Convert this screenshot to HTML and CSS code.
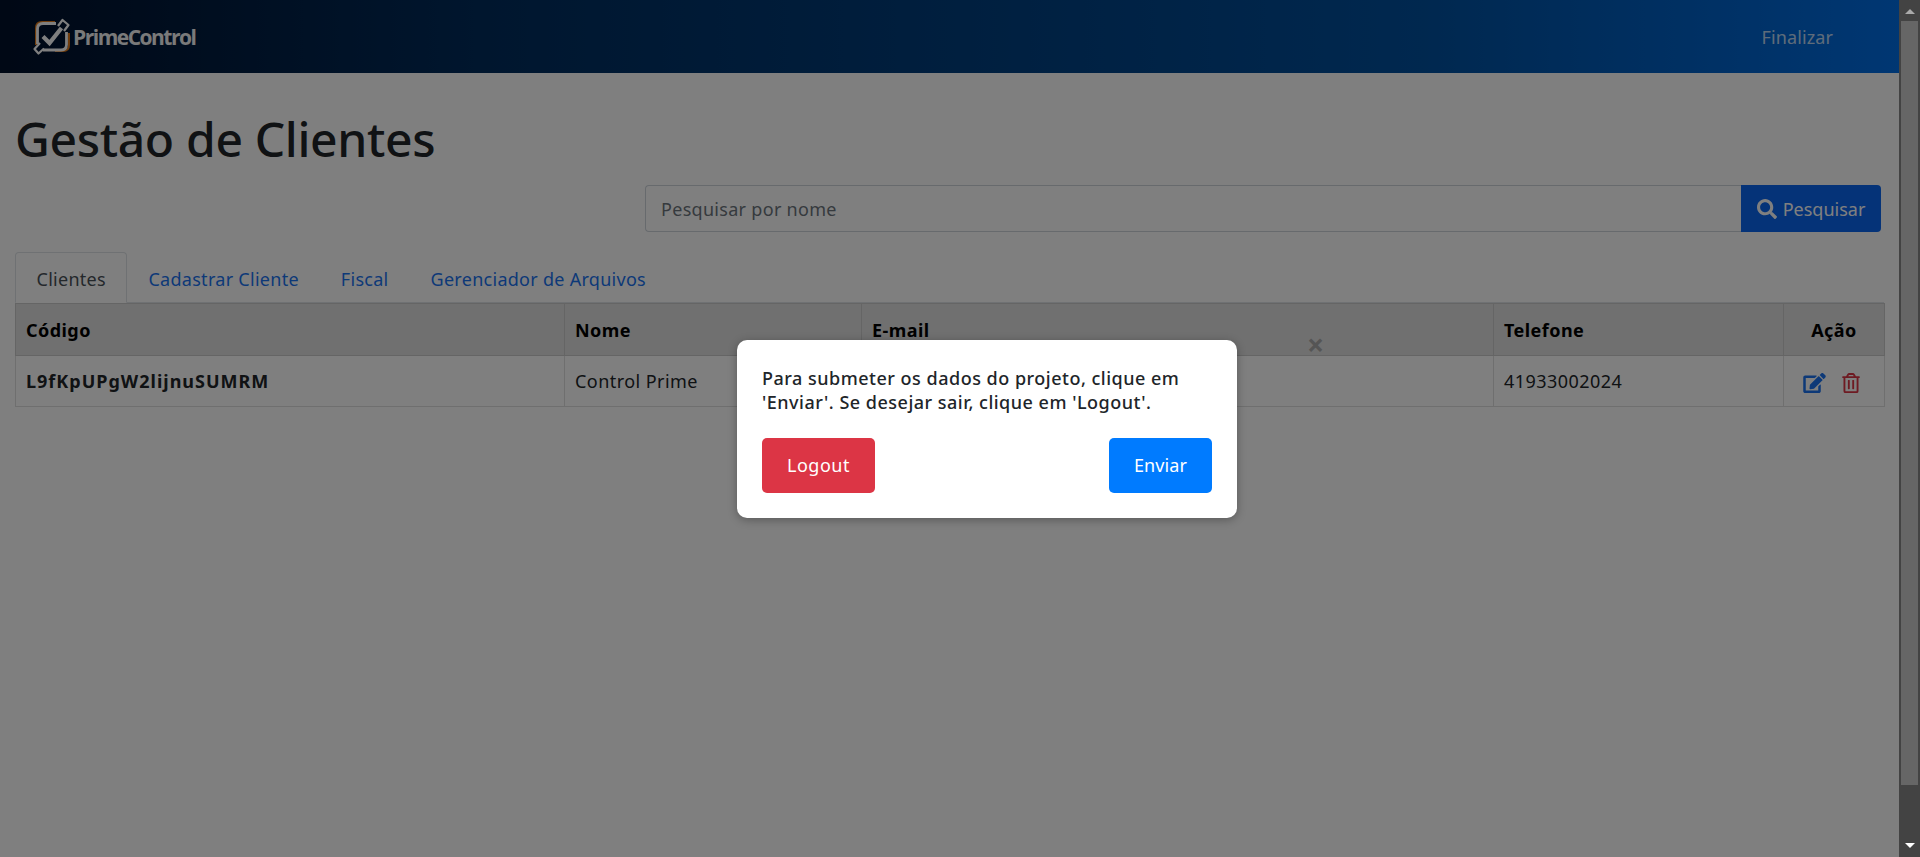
FILE: index.html
```html
<!DOCTYPE html>
<html lang="pt-BR">
<head>
	<meta charset="utf-8" />
	<title>Gestão de Clientes</title>
	<link rel="stylesheet" href="styles.css">
</head>
<body>
	<div class="app">
		<div class="main">
			<header class="topbar">
				<a class="brand" href="#">
					<svg class="brand-icon" viewBox="0 0 40 40" fill="none">
						<path d="M3 28 L3 11 Q3 5 9 5 L22 5" stroke="#e07b1a" stroke-width="2" />
						<path d="M36 16 L36 28 Q36 34 30 34 L22 34" stroke="#e07b1a" stroke-width="2" />
						<path d="M23 6.500 L10 6.500 Q4.500 6.500 4.500 12 L4.500 27 M10 33 L28 33 Q33.500 33 33.500 27.500 L33.500 15" stroke="#fff" stroke-width="2.800" />
						<path d="M10 19.500 L16.500 26 L28.500 11" stroke="#fff" stroke-width="4.200" />
						<path d="M25 9 L29.500 3 L35.500 8 L31 14 M7 26 L1.500 32 L5.500 36.500 L11 31.500" stroke="#fff" stroke-width="2.200" stroke-linejoin="round" />
					</svg>
					<span class="brand-name">PrimeControl</span>
				</a>
				<a class="topbar-link" href="#">Finalizar</a>
			</header>

			<main class="content">
				<h1 class="page-title">Gestão de Clientes</h1>

				<form class="search">
					<input class="search-input" type="text" placeholder="Pesquisar por nome">
					<button class="search-btn" type="button">
						<svg class="search-icon" viewBox="0 0 512 512"><path fill="currentColor" d="M505 442.700L405.300 343c-4.500-4.500-10.600-7-17-7H372c27.600-35.300 44-79.700 44-128C416 93.100 322.900 0 208 0S0 93.100 0 208s93.100 208 208 208c48.300 0 92.700-16.400 128-44v16.300c0 6.400 2.500 12.500 7 17l99.700 99.700c9.400 9.400 24.600 9.400 33.900 0l28.300-28.300c9.400-9.400 9.400-24.600.1-34zM208 336c-70.700 0-128-57.200-128-128 0-70.700 57.200-128 128-128 70.700 0 128 57.200 128 128 0 70.700-57.200 128-128 128z"/></svg>
						Pesquisar
					</button>
				</form>

				<ul class="tabs">
					<li><a class="tab tab-active" href="#">Clientes</a></li>
					<li><a class="tab" href="#">Cadastrar Cliente</a></li>
					<li><a class="tab" href="#">Fiscal</a></li>
					<li><a class="tab" href="#">Gerenciador de Arquivos</a></li>
				</ul>

				<table class="grid">
					<colgroup>
						<col class="col-code">
						<col class="col-name">
						<col class="col-mail">
						<col class="col-phone">
						<col class="col-action">
					</colgroup>
					<thead>
						<tr>
							<th>Código</th>
							<th>Nome</th>
							<th>E-mail</th>
							<th>Telefone</th>
							<th class="center">Ação</th>
						</tr>
					</thead>
					<tbody>
						<tr>
							<td class="strong">L9fKpUPgW2lijnuSUMRM</td>
							<td>Control Prime</td>
							<td></td>
							<td>41933002024</td>
							<td class="center">
								<span class="actions">
									<svg class="icon-edit" viewBox="0 0 576 512"><path fill="currentColor" d="M402.600 83.200l90.200 90.200c3.800 3.800 3.800 10 0 13.800L274.400 405.600l-92.800 10.300c-12.400 1.400-22.900-9.100-21.500-21.500l10.300-92.800L388.800 83.200c3.800-3.800 10-3.800 13.800 0zm162-22.900l-48.800-48.800c-15.200-15.200-39.900-15.200-55.200 0l-35.400 35.400c-3.800 3.800-3.800 10 0 13.800l90.200 90.200c3.800 3.800 10 3.800 13.800 0l35.400-35.400c15.200-15.300 15.200-40 0-55.200zM384 346.200V448H64V128h229.800c3.200 0 6.200-1.300 8.500-3.500l40-40c7.600-7.600 2.200-20.500-8.500-20.500H48C21.500 64 0 85.500 0 112v352c0 26.500 21.500 48 48 48h352c26.500 0 48-21.500 48-48V306.200c0-10.700-12.900-16-20.500-8.500l-40 40c-2.200 2.300-3.500 5.300-3.500 8.500z"/></svg>
									<svg class="icon-trash" viewBox="0 0 448 512"><path fill="currentColor" d="M268 416h24a12 12 0 0 0 12-12V188a12 12 0 0 0-12-12h-24a12 12 0 0 0-12 12v216a12 12 0 0 0 12 12zM432 80h-82.410l-34-56.700A48 48 0 0 0 274.410 0H173.590a48 48 0 0 0-41.160 23.300L98.410 80H16A16 16 0 0 0 0 96v16a16 16 0 0 0 16 16h16v336a48 48 0 0 0 48 48h288a48 48 0 0 0 48-48V128h16a16 16 0 0 0 16-16V96a16 16 0 0 0-16-16zM171.840 50.910A6 6 0 0 1 177 48h94a6 6 0 0 1 5.150 2.910L293.610 80H154.390zM368 464H80V128h288zm-212-48h24a12 12 0 0 0 12-12V188a12 12 0 0 0-12-12h-24a12 12 0 0 0-12 12v216a12 12 0 0 0 12 12z"/></svg>
								</span>
							</td>
						</tr>
					</tbody>
				</table>
			</main>

			<div class="overlay">
				<div class="dialog">
					<span class="dialog-close">×</span>
					<p class="dialog-text">Para submeter os dados do projeto, clique em 'Enviar'. Se desejar sair, clique em 'Logout'.</p>
					<div class="dialog-actions">
						<button class="btn btn-red" type="button">Logout</button>
						<button class="btn btn-blue" type="button">Enviar</button>
					</div>
				</div>
			</div>
		</div>

		<div class="scrollbar">
			<span class="arrow arrow-up"></span>
			<span class="thumb"></span>
			<span class="arrow arrow-down"></span>
		</div>
	</div>
</body>
</html>
```

FILE: styles.css
```css
*{margin: 0;padding: 0;box-sizing: border-box;}
html,body{height: 100%;overflow: hidden;}
body
{
	background: #fff;
	color: #212529;
	font-family: "Noto Sans", "Open Sans", sans-serif;
	font-size: 18px;
}
a{text-decoration: none;}

.app{display: flex;height: 857px;}
.main{flex: 1;min-width: 0;position: relative;}

/* barra do topo */
.topbar
{
	height: 73px;
	display: flex;
	align-items: center;
	justify-content: space-between;
	padding: 0 66px 0 33px;
	background: linear-gradient(90deg, #00102a 0%, #002c5c 25%, #00509f 75%, #006ee6 100%);
}
.brand{display: flex;align-items: center;color: #f4f4f4;}
.brand-icon{width: 40px;height: 40px;}
.brand-name{font-family: "Open Sans", sans-serif;font-weight: 700;font-size: 21px;letter-spacing: -1.5px;}
.topbar-link{color: rgba(255,255,255,.75);font-size: 18px;letter-spacing: .1px;}

.content{padding: 0 15px;}
.page-title{font-size: 48px;font-weight: 500;line-height: 58px;padding-top: 37px;color: #212529;letter-spacing: -.35px;}

/* busca */
.search{display: flex;margin: 17px 3px 20px 630px;height: 47px;}
.search-input
{
	flex: 1;
	min-width: 0;
	border: 1px solid #ced4da;
	border-right: 0;
	border-radius: 4px 0 0 4px;
	padding: 1px 15px 0;
	font: inherit;
	letter-spacing: .3px;
	color: #495057;
}
.search-input::placeholder{color: #6c757d;opacity: 1;}
.search-btn
{
	width: 140px;
	display: flex;
	align-items: center;
	justify-content: center;
	gap: 6px;
	border: 0;
	border-radius: 0 4px 4px 0;
	background: #0a66f0;
	color: #fff;
	font: inherit;
}
.search-icon{width: 20px;height: 20px;}

/* abas */
.tabs{display: flex;list-style: none;border-bottom: 1px solid #dee2e6;height: 51px;letter-spacing: .28px;}
.tab{display: block;height: 51px;line-height: 52px;padding: 0 20px;border: 1px solid transparent;border-radius: 4px 4px 0 0;color: #1a73f0;}
.tab-active{color: #495057;background: #fff;border-color: #dee2e6 #dee2e6 #fff;padding: 0 20.5px;}

/* tabela */
.grid{width: 1869px;table-layout: fixed;border-collapse: collapse;letter-spacing: .45px;}
.col-code{width: 549px;}
.col-name{width: 297px;}
.col-mail{width: 632px;}
.col-phone{width: 290px;}
.col-action{width: 101px;}
.grid th,.grid td{border: 1px solid #dedede;padding: 0 10px;text-align: left;}
.grid th{height: 52px;background: #e0e0e0;border-color: #cbcbcb;color: #000;font-weight: 700;}
.grid td{height: 51px;}
.grid .center{text-align: center;}
.grid .strong{font-weight: 700;letter-spacing: 1px;}
.actions{display: inline-flex;align-items: center;gap: 16px;vertical-align: middle;padding-right: 5px;}
.icon-edit{width: 23px;height: 20px;color: #1a73f0;}
.icon-trash{width: 18px;height: 20px;color: #dc3545;}

/* modal por cima da pagina */
.overlay
{
	position: absolute;
	top: 0;
	left: 0;
	right: 0;
	bottom: 0;
	display: flex;
	align-items: center;
	padding-left: 737px;
	background: rgba(0,0,0,.5);
}
.dialog
{
	position: relative;
	width: 500px;
	padding: 25px;
	background: #fff;
	border-radius: 10px;
	box-shadow: 0 2px 10px rgba(0,0,0,.3);
}
.dialog-close
{
	position: absolute;
	top: -12px;
	left: 570px;
	font-size: 30px;
	font-weight: 700;
	line-height: 34px;
	color: #555;
}
.dialog-text{font-weight: 500;line-height: 24px;padding-top: 1px;margin-bottom: 24px;letter-spacing: .5px;}
.dialog-actions{display: flex;justify-content: space-between;}
.btn{height: 55px;border: 0;border-radius: 5px;color: #fff;font: inherit;letter-spacing: .5px;padding: 0 25px;}
.btn-red{background: #dc3545;}
.btn-blue{background: #007bff;letter-spacing: .1px;}

/* barra de rolagem */
.scrollbar{width: 21px;background: #434343;display: flex;flex-direction: column;align-items: center;}
.thumb{width: 17px;height: 764px;background: #666;}
.arrow{width: 0;height: 0;border-left: 5px solid transparent;border-right: 5px solid transparent;}
.arrow-up{border-bottom: 5px solid #aaa;margin: 9px 0 7px;}
.arrow-down{border-top: 5px solid #fff;margin-top: 58px;}
```
